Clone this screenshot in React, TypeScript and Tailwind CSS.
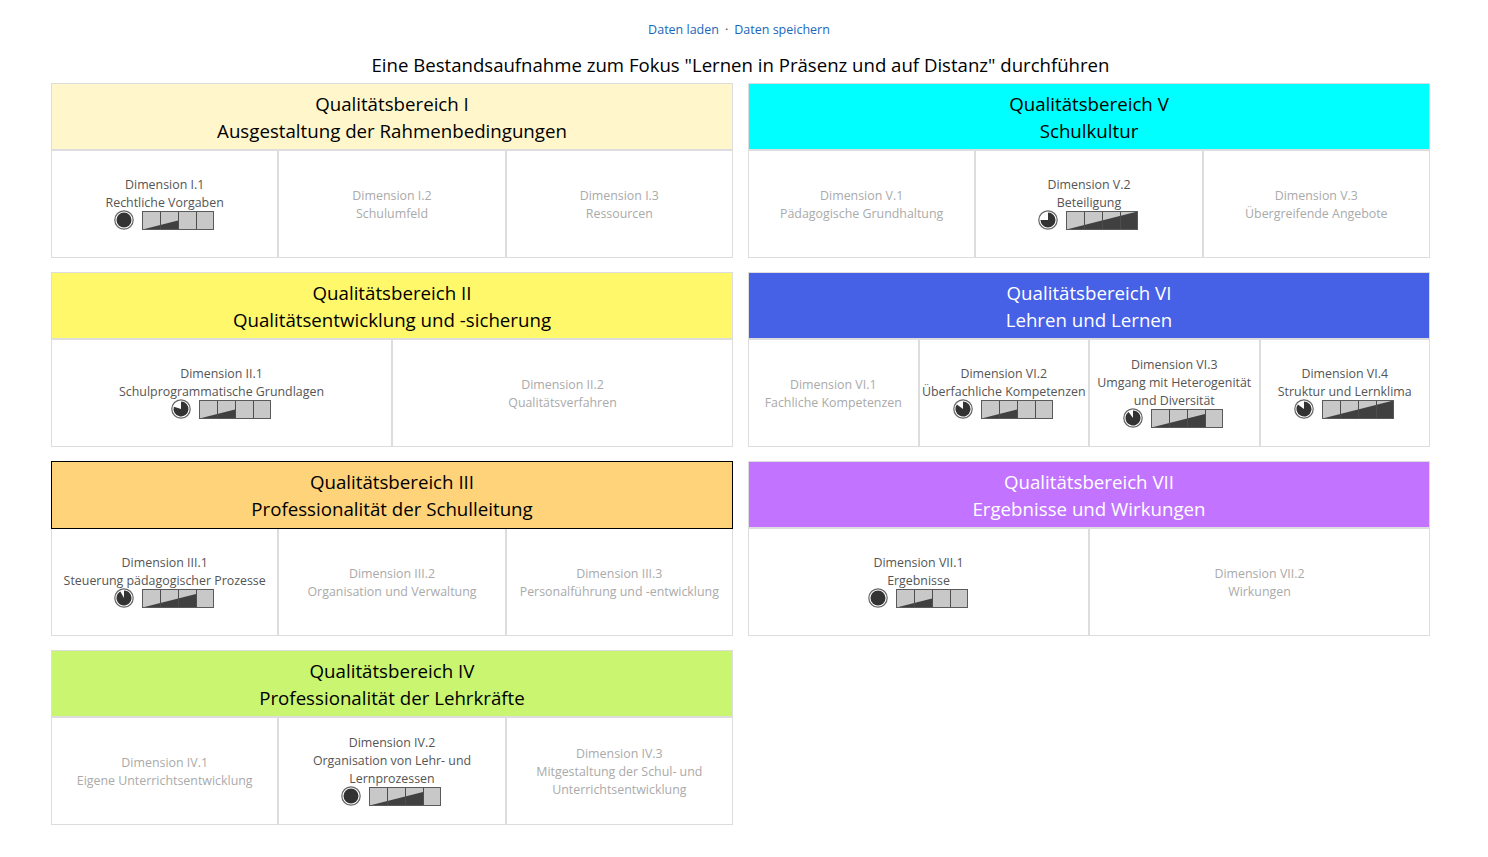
const font = "font-['Open_Sans','Noto_Sans',sans-serif]";

type Dim = {
  title: string;
  name: string[];
  pie?: number;
  cells?: number;
};

type Area = {
  title: string;
  subtitle: string;
  headerClass: string;
  selected?: boolean;
  dims: Dim[];
};

const left: Area[] = [
  {
    title: "Qualitätsbereich I",
    subtitle: "Ausgestaltung der Rahmenbedingungen",
    headerClass: "bg-[#fff6cc] text-black",
    dims: [
      { title: "Dimension I.1", name: ["Rechtliche Vorgaben"], pie: 1, cells: 2 },
      { title: "Dimension I.2", name: ["Schulumfeld"] },
      { title: "Dimension I.3", name: ["Ressourcen"] },
    ],
  },
  {
    title: "Qualitätsbereich II",
    subtitle: "Qualitätsentwicklung und -sicherung",
    headerClass: "bg-[#fff86b] text-black",
    dims: [
      { title: "Dimension II.1", name: ["Schulprogrammatische Grundlagen"], pie: 0.8, cells: 2 },
      { title: "Dimension II.2", name: ["Qualitätsverfahren"] },
    ],
  },
  {
    title: "Qualitätsbereich III",
    subtitle: "Professionalität der Schulleitung",
    headerClass: "bg-[#ffd37a] text-black",
    selected: true,
    dims: [
      { title: "Dimension III.1", name: ["Steuerung pädagogischer Prozesse"], pie: 0.92, cells: 3 },
      { title: "Dimension III.2", name: ["Organisation und Verwaltung"] },
      { title: "Dimension III.3", name: ["Personalführung und -entwicklung"] },
    ],
  },
  {
    title: "Qualitätsbereich IV",
    subtitle: "Professionalität der Lehrkräfte",
    headerClass: "bg-[#c9f570] text-black",
    dims: [
      { title: "Dimension IV.1", name: ["Eigene Unterrichtsentwicklung"] },
      { title: "Dimension IV.2", name: ["Organisation von Lehr- und", "Lernprozessen"], pie: 1, cells: 3 },
      { title: "Dimension IV.3", name: ["Mitgestaltung der Schul- und", "Unterrichtsentwicklung"] },
    ],
  },
];

const right: Area[] = [
  {
    title: "Qualitätsbereich V",
    subtitle: "Schulkultur",
    headerClass: "bg-[#00ffff] text-black",
    dims: [
      { title: "Dimension V.1", name: ["Pädagogische Grundhaltung"] },
      { title: "Dimension V.2", name: ["Beteiligung"], pie: 0.75, cells: 4 },
      { title: "Dimension V.3", name: ["Übergreifende Angebote"] },
    ],
  },
  {
    title: "Qualitätsbereich VI",
    subtitle: "Lehren und Lernen",
    headerClass: "bg-[#4660e6] text-white",
    dims: [
      { title: "Dimension VI.1", name: ["Fachliche Kompetenzen"] },
      { title: "Dimension VI.2", name: ["Überfachliche Kompetenzen"], pie: 0.85, cells: 2 },
      { title: "Dimension VI.3", name: ["Umgang mit Heterogenität", "und Diversität"], pie: 0.9, cells: 3 },
      { title: "Dimension VI.4", name: ["Struktur und Lernklima"], pie: 0.85, cells: 4 },
    ],
  },
  {
    title: "Qualitätsbereich VII",
    subtitle: "Ergebnisse und Wirkungen",
    headerClass: "bg-[#c273ff] text-white",
    dims: [
      { title: "Dimension VII.1", name: ["Ergebnisse"], pie: 1, cells: 2 },
      { title: "Dimension VII.2", name: ["Wirkungen"] },
    ],
  },
];

function Pie({ value }: { value: number }) {
  const a = value * 2 * Math.PI;
  const x = 10 + 7.5 * Math.sin(a);
  const y = 10 - 7.5 * Math.cos(a);
  const large = value > 0.5 ? 1 : 0;
  return (
    <svg width="20" height="20" viewBox="0 0 20 20" className="shrink-0">
      <circle cx="10" cy="10" r="9.2" fill="#fff" stroke="#666" strokeWidth="1.2" />
      {value >= 1 ? (
        <circle cx="10" cy="10" r="7.5" fill="#333" />
      ) : (
        <path d={`M10 10 L10 2.5 A7.5 7.5 0 ${large} 1 ${x} ${y} Z`} fill="#333" />
      )}
    </svg>
  );
}

function Bar({ cells }: { cells: number }) {
  // wedge rises over the whole bar, only the reached cells are filled
  const w = cells * 18;
  const h = (w / 72) * 18;
  return (
    <svg width="72" height="19" viewBox="0 0 72 19" className="shrink-0">
      <rect x="0.5" y="0.5" width="71" height="18" fill="#c8c8c8" />
      <path d={`M0.5 18.5 L${Math.min(w, 71.5)} 18.5 L${Math.min(w, 71.5)} ${18.5 - h} Z`} fill="#404040" />
      <path d="M18.5 0.5V18.5M36.5 0.5V18.5M54.5 0.5V18.5" stroke="#4d4d4d" strokeWidth="1" fill="none" />
      <rect x="0.5" y="0.5" width="71" height="18" fill="none" stroke="#5a5a5a" strokeWidth="1" />
    </svg>
  );
}

function DimCell({ dim }: { dim: Dim }) {
  const active = dim.pie !== undefined;
  return (
    <div
      className={`flex min-w-0 flex-1 flex-col items-center justify-center border-l-2 border-[#dddddd] text-center text-[12.4px] leading-[18px] first:border-l-0 ${
        active ? "pb-[3px] text-[#555555]" : "pt-[2px] text-[#aaaaaa]"
      }`}
    >
      <div>{dim.title}</div>
      {dim.name.map((line) => (
        <div key={line} className="whitespace-nowrap">
          {line}
        </div>
      ))}
      {active && (
        <div className="-mt-px flex h-[18px] items-center gap-2 pr-[2px]">
          <Pie value={dim.pie!} />
          <Bar cells={dim.cells!} />
        </div>
      )}
    </div>
  );
}

function AreaCard({ area }: { area: Area }) {
  return (
    <div className="flex h-[175px] flex-col border border-[#dddddd]">
      <div
        className={`flex shrink-0 flex-col items-center justify-center text-[18.7px] leading-[27px] ${area.headerClass} ${
          area.selected
            ? "mb-px h-[66px] outline outline-1 outline-black"
            : "h-[67px] border-b-2 border-[#dddddd]"
        }`}
      >
        <div>{area.title}</div>
        <div>{area.subtitle}</div>
      </div>
      <div className="flex min-h-0 flex-1">
        {area.dims.map((d) => (
          <DimCell key={d.title} dim={d} />
        ))}
      </div>
    </div>
  );
}

export default function App() {
  return (
    <div className={`min-h-[857px] bg-white ${font}`}>
      <div className="ml-[51px] w-[1379px]">
        <div className="flex h-[53px] items-start justify-center gap-[6px] pt-[21px] pr-[3px] text-[12.5px] leading-[18px] text-[#1a66bb]">
          <a href="#">Daten laden</a>
          <span className="text-[#444444]">·</span>
          <a href="#">Daten speichern</a>
        </div>
        <h1 className="h-[30px] text-center text-[18.6px] leading-[24px] font-normal text-black">
          Eine Bestandsaufnahme zum Fokus "Lernen in Präsenz und auf Distanz" durchführen
        </h1>
        <div className="flex gap-[15px]">
          <div className="flex w-[682px] flex-col gap-[14px]">
            {left.map((a) => (
              <AreaCard key={a.title} area={a} />
            ))}
          </div>
          <div className="flex w-[682px] flex-col gap-[14px]">
            {right.map((a) => (
              <AreaCard key={a.title} area={a} />
            ))}
          </div>
        </div>
      </div>
    </div>
  );
}
